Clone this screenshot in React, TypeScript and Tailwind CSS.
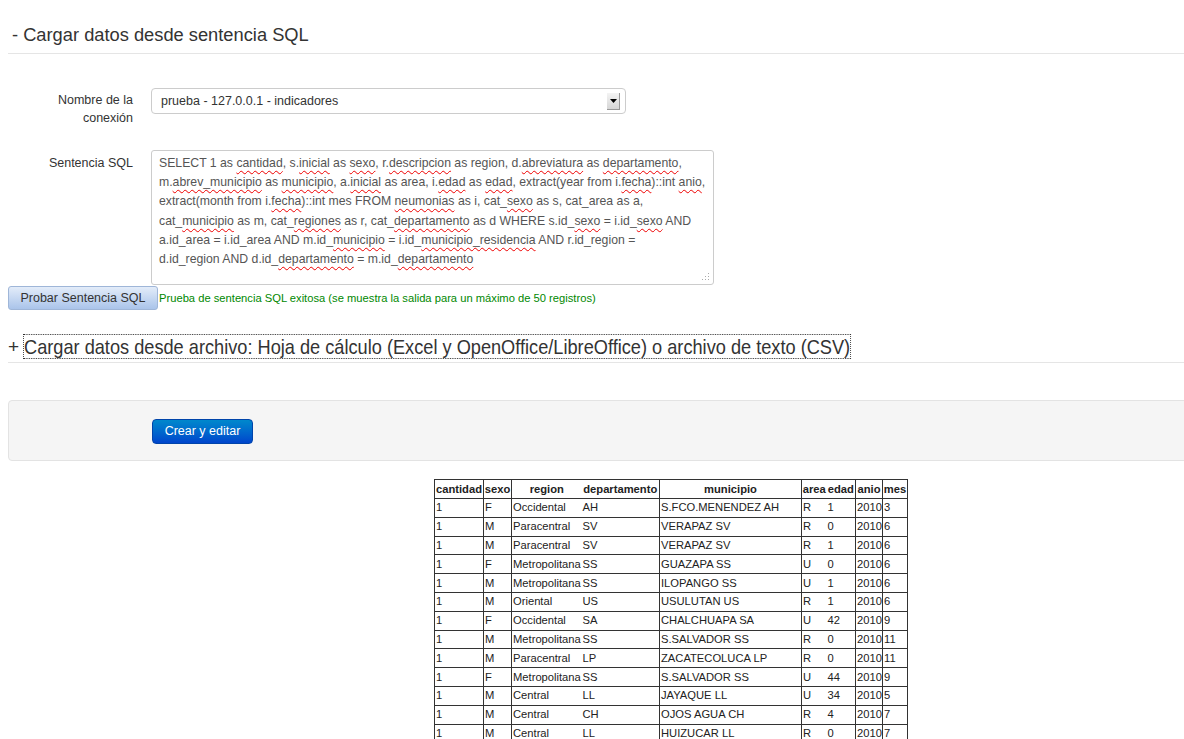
import React from "react";

const sql: string[] = [
  "SELECT 1 as {cantidad}, s.{inicial} as {sexo}, r.{descripcion} as region, d.{abreviatura} as {departamento},",
  "m.{abrev_municipio} as {municipio}, a.{inicial} as area, i.{edad} as {edad}, extract(year from i.{fecha})::int {anio},",
  "extract(month from i.{fecha})::int mes FROM {neumonias} as i, cat_{sexo} as s, cat_area as a,",
  "cat_{municipio} as m, cat_{regiones} as r, cat_{departamento} as d WHERE s.id_{sexo} = i.id_{sexo} AND",
  "a.id_area = i.id_area AND m.id_{municipio} = i.id_{municipio_residencia} AND r.id_region =",
  "d.id_region AND d.id_{departamento} = m.id_{departamento}",
];

function SqlLine({ text }: { text: string }) {
  const parts = text.split(/(\{[^}]+\})/);
  return (
    <div className="whitespace-pre">
      {parts.map((p, i) =>
        p.startsWith("{") ? (
          <span
            key={i}
            className="underline decoration-wavy decoration-[#e00] decoration-1 underline-offset-[3px]"
          >
            {p.slice(1, -1)}
          </span>
        ) : (
          <span key={i}>{p}</span>
        )
      )}
    </div>
  );
}

// departamento and edad have no left rule in the reference
const cols = [
  { name: "cantidad", w: 49, open: false },
  { name: "sexo", w: 28, open: false },
  { name: "region", w: 70, open: false },
  { name: "departamento", w: 78, open: true },
  { name: "municipio", w: 142, open: false },
  { name: "area", w: 25, open: false },
  { name: "edad", w: 29, open: true },
  { name: "anio", w: 27, open: false },
  { name: "mes", w: 25, open: false },
];

const rows: string[][] = [
  ["1", "F", "Occidental", "AH", "S.FCO.MENENDEZ AH", "R", "1", "2010", "3"],
  ["1", "M", "Paracentral", "SV", "VERAPAZ SV", "R", "0", "2010", "6"],
  ["1", "M", "Paracentral", "SV", "VERAPAZ SV", "R", "1", "2010", "6"],
  ["1", "F", "Metropolitana", "SS", "GUAZAPA SS", "U", "0", "2010", "6"],
  ["1", "M", "Metropolitana", "SS", "ILOPANGO SS", "U", "1", "2010", "6"],
  ["1", "M", "Oriental", "US", "USULUTAN US", "R", "1", "2010", "6"],
  ["1", "F", "Occidental", "SA", "CHALCHUAPA SA", "U", "42", "2010", "9"],
  ["1", "M", "Metropolitana", "SS", "S.SALVADOR SS", "R", "0", "2010", "11"],
  ["1", "M", "Paracentral", "LP", "ZACATECOLUCA LP", "R", "0", "2010", "11"],
  ["1", "F", "Metropolitana", "SS", "S.SALVADOR SS", "U", "44", "2010", "9"],
  ["1", "M", "Central", "LL", "JAYAQUE LL", "U", "34", "2010", "5"],
  ["1", "M", "Central", "CH", "OJOS AGUA CH", "R", "4", "2010", "7"],
  ["1", "M", "Central", "LL", "HUIZUCAR LL", "R", "0", "2010", "7"],
];

function sides(j: number) {
  const left = cols[j].open ? "border-l-0 " : "border-l ";
  const right = j + 1 < cols.length && cols[j + 1].open ? "border-r-0" : "border-r";
  return left + right;
}

export default function App() {
  return (
    <div className="min-h-screen overflow-hidden bg-white pl-2 font-['Liberation_Sans',Arial,sans-serif] text-[#333]">
      {/* SQL HEADER */}
      <h2 className="h-[54px] border-b border-[#e5e5e5] pl-1 pt-[23px] text-[18.3px] leading-[23px]">
        - Cargar datos desde sentencia SQL
      </h2>

      {/* CONEXION */}
      <div className="mt-[34px] flex gap-[18px]">
        <div className="w-[125px] pt-[3px] text-right text-[12.5px] leading-[18px]">
          Nombre de la
          <br />
          conexión
        </div>
        <div className="flex h-[26px] w-[475px] items-center justify-between rounded-[4px] border border-[#ccc] pl-[9px] pr-[5px] text-[12.5px]">
          <span>prueba - 127.0.0.1 - indicadores</span>
          <div className="flex h-[17px] w-[13px] items-center justify-center border-r border-b border-[#999] bg-gradient-to-b from-[#f4f4f4] to-[#d6d6d6]">
            <svg width="7" height="4" viewBox="0 0 7 4">
              <path d="M0 0 H7 L3.5 4 Z" fill="#000" />
            </svg>
          </div>
        </div>
      </div>

      {/* SENTENCIA */}
      <div className="mt-[23px] flex gap-[18px]">
        <div className="w-[125px] pt-[4px] text-right text-[12.5px] leading-[18px]">
          Sentencia SQL
        </div>
        <div className="relative h-[135px] w-[563px] rounded-[3px] border border-[#ccc] px-[7px] pt-[3px] text-[12.25px] leading-[19.2px] text-[#555]">
          {sql.map((l, i) => (
            <SqlLine key={i} text={l} />
          ))}
          <svg className="absolute right-[3px] bottom-[3px]" width="9" height="9" viewBox="0 0 9 9">
            <rect x="7" y="1" width="1" height="1" fill="#aaa" />
            <rect x="4" y="4" width="1" height="1" fill="#aaa" />
            <rect x="7" y="4" width="1" height="1" fill="#aaa" />
            <rect x="1" y="7" width="1" height="1" fill="#aaa" />
            <rect x="4" y="7" width="1" height="1" fill="#aaa" />
            <rect x="7" y="7" width="1" height="1" fill="#aaa" />
          </svg>
        </div>
      </div>

      {/* PROBAR */}
      <div className="mt-px flex items-center gap-px">
        <button className="h-[24px] w-[150px] rounded-[3px] border border-[#9fb6d8] bg-gradient-to-b from-[#e3ecf9] to-[#aac4ea] text-[12.5px] text-[#333]">
          Probar Sentencia SQL
        </button>
        <span className="text-[11.2px] text-[#080]">
          Prueba de sentencia SQL exitosa (se muestra la salida para un máximo de 50 registros)
        </span>
      </div>

      {/* ARCHIVO HEADER */}
      <div className="mt-[25px] flex items-center border-b border-[#e5e5e5] pb-[4px]">
        <span className="w-[16px] text-[19px] leading-[23px]">+</span>
        <span className="inline-block origin-left scale-x-[0.866] whitespace-nowrap outline-1 outline-dotted outline-[#333] text-[21px] leading-[23px]">
          Cargar datos desde archivo: Hoja de cálculo (Excel y OpenOffice/LibreOffice) o archivo de texto (CSV)
        </span>
      </div>

      {/* ACCIONES */}
      <div className="-mr-[10px] mt-[37px] h-[61px] rounded-[4px] border border-[#e3e3e3] bg-[#f5f5f5] pt-[17px] pl-[143px]">
        <button className="h-[25px] w-[101px] rounded-[4px] border border-[#0044aa] bg-gradient-to-b from-[#0088cc] to-[#0044cc] text-[12.5px] text-white">
          Crear y editar
        </button>
      </div>

      {/* RESULTADO */}
      <table className="mt-[18px] ml-[426px] w-[473px] table-fixed border-collapse text-[11.2px] leading-[17px] text-[#222]">
        <colgroup>
          {cols.map((c) => (
            <col key={c.name} style={{ width: c.w }} />
          ))}
        </colgroup>
        <thead>
          <tr>
            {cols.map((c, j) => (
              <th
                key={c.name}
                className={
                  "h-[19px] border-y border-[#333] px-0 text-center font-bold whitespace-nowrap " + sides(j)
                }
              >
                {c.name}
              </th>
            ))}
          </tr>
        </thead>
        <tbody>
          {rows.map((r, i) => (
            <tr key={i}>
              {r.map((v, j) => (
                <td
                  key={j}
                  className={"h-[18.8px] border-y border-[#333] px-px text-left whitespace-nowrap " + sides(j)}
                >
                  {v}
                </td>
              ))}
            </tr>
          ))}
        </tbody>
      </table>
    </div>
  );
}
